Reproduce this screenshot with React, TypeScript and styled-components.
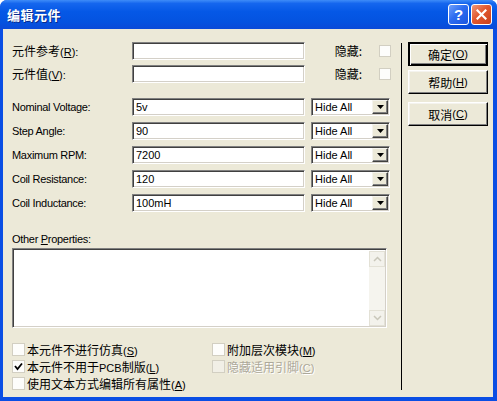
import React from 'react';
import styled, { createGlobalStyle } from 'styled-components';

const Global = createGlobalStyle`
  html, body { margin: 0; padding: 0; background: #ffffff; }
  body { font-family: "Liberation Sans", "Noto Sans CJK SC", sans-serif; }
  * { box-sizing: border-box; }
`;

const Window = styled.div`
  width: 497px;
  height: 401px;
  display: flex;
  flex-direction: column;
  background: #0a4ee4;
  border-radius: 7px 7px 0 0;
  overflow: hidden;
`;

const TitleBar = styled.div`
  height: 29px;
  flex: none;
  display: flex;
  align-items: center;
  padding: 0 5px 0 7px;
  background: linear-gradient(#3e8cf8 0%, #1566ee 12%, #0558e6 40%, #0453e0 75%, #0a4ad8 100%);
`;

const Title = styled.div`
  flex: 1;
  color: #ffffff;
  font-family: "Noto Sans CJK SC", sans-serif;
  font-weight: 700;
  font-size: 13px;
  letter-spacing: 0.5px;
  text-shadow: 1px 1px 0 #0b2a8a;
`;

const CaptionButton = styled.div<{ $kind: 'help' | 'close' }>`
  width: 21px;
  height: 21px;
  margin-left: 2px;
  border: 1px solid #ffffff;
  border-radius: 3px;
  display: flex;
  align-items: center;
  justify-content: center;
  color: #ffffff;
  font-weight: 700;
  font-size: 15px;
  font-family: "Liberation Sans", sans-serif;
  background: ${p =>
    p.$kind === 'help'
      ? 'linear-gradient(135deg, #6fa0fb 0%, #2c6cf0 45%, #1a55e0 100%)'
      : 'linear-gradient(135deg, #f0987a 0%, #e2582f 45%, #c9401c 100%)'};
`;

const Frame = styled.div`
  flex: 1;
  display: flex;
  padding: 0 4px 4px 3px;
`;

const Body = styled.div`
  flex: 1;
  display: flex;
  background: #ece9d8;
  font-size: 12px;
  color: #000000;
`;

const Main = styled.div`
  width: 398px;
  padding: 13px 0 0 9px;
  display: flex;
  flex-direction: column;
`;

const Separator = styled.div`
  width: 1px;
  height: 347px;
  margin-top: 14px;
  background: #000000;
`;

const ButtonCol = styled.div`
  padding: 13px 0 0 6px;
  display: flex;
  flex-direction: column;
`;

const PushButton = styled.div<{ $default?: boolean; $gap: number }>`
  width: 80px;
  height: 24px;
  margin-top: ${p => p.$gap}px;
  display: flex;
  align-items: center;
  justify-content: center;
  font-size: 12px;
  font-family: "Noto Sans CJK SC", sans-serif;
  background: #ece9d8;
  border: 1px solid ${p => (p.$default ? '#000000' : '#ffffff')};
  border-right-color: #000000;
  border-bottom-color: #000000;
  box-shadow: ${p =>
    p.$default
      ? 'inset 1px 1px 0 #000, inset 2px 2px 0 #fff, inset -1px -1px 0 #000, inset -2px -2px 0 #808080'
      : 'inset -1px -1px 0 #808080, inset 1px 1px 0 #f4f3ee'};
`;

const U = styled.span`
  text-decoration: underline;
  text-underline-offset: 1px;
`;

const Acc = styled.span`
  font-family: "Liberation Sans", sans-serif;
  font-size: 11px;
`;

const RefRow = styled.div<{ $gap: number }>`
  display: grid;
  grid-template-columns: 120px 173px 57px 17px 12px;
  align-items: center;
  height: 18px;
  margin-top: ${p => p.$gap}px;
`;

const CnLabel = styled.div`
  font-family: "Noto Sans CJK SC", sans-serif;
  font-size: 12px;
  white-space: nowrap;
  line-height: 14px;
`;

const HideLabel = styled(CnLabel)`
  text-align: right;
`;

const Field = styled.div`
  height: 18px;
  background: #ffffff;
  border-top: 1px solid #808080;
  border-left: 1px solid #808080;
  border-bottom: 1px solid #ffffff;
  border-right: 1px solid #ffffff;
  box-shadow: inset 1px 1px 0 #404040, inset -1px -1px 0 #d4d0c8;
  padding: 0 0 0 3px;
  display: flex;
  align-items: center;
  font-size: 11px;
  font-family: "Liberation Sans", sans-serif;
  white-space: nowrap;
  overflow: hidden;
`;

const Box = styled.div<{ $size: number; $disabled?: boolean }>`
  width: ${p => p.$size}px;
  height: ${p => p.$size}px;
  flex: none;
  background: ${p => (p.$disabled ? '#f1efe6' : '#fdfdfb')};
  border: 1px solid #d2cfc2;
  display: flex;
  align-items: center;
  justify-content: center;
`;

const PropRow = styled.div<{ $gap: number }>`
  display: grid;
  grid-template-columns: 120px 173px 6px 79px;
  align-items: center;
  height: 18px;
  margin-top: ${p => p.$gap}px;
`;

const EnLabel = styled.div`
  font-size: 11px;
  letter-spacing: -0.3px;
  white-space: nowrap;
  line-height: 13px;
`;

const Select = styled(Field)`
  grid-column: 4;
  padding: 0 1px 0 3px;
  justify-content: space-between;
`;

const ArrowButton = styled.div`
  width: 16px;
  height: 14px;
  background: #ece9d8;
  border-top: 1px solid #f4f3ee;
  border-left: 1px solid #f4f3ee;
  border-right: 1px solid #404040;
  border-bottom: 1px solid #404040;
  box-shadow: inset -1px -1px 0 #808080;
  display: flex;
  align-items: center;
  justify-content: center;
`;

const OtherLabel = styled(EnLabel)`
  margin-top: 21px;
  height: 13px;
`;

const TextArea = styled.div`
  margin-top: 2px;
  width: 375px;
  height: 80px;
  background: #ffffff;
  border-top: 1px solid #808080;
  border-left: 1px solid #808080;
  border-bottom: 1px solid #ffffff;
  border-right: 1px solid #ffffff;
  box-shadow: inset 1px 1px 0 #404040, inset -1px -1px 0 #d4d0c8;
  display: flex;
  justify-content: flex-end;
  padding: 2px 1px 1px 2px;
`;

const ScrollTrack = styled.div`
  width: 16px;
  display: flex;
  flex-direction: column;
  justify-content: space-between;
  background: #f5f4ee;
`;

const ScrollBtn = styled.div`
  width: 16px;
  height: 16px;
  border: 1px solid #e3e1d6;
  background: #f3f2ec;
  display: flex;
  align-items: center;
  justify-content: center;
`;

const CheckGrid = styled.div`
  margin-top: 15px;
  display: grid;
  grid-template-columns: 200px 1fr;
  grid-auto-rows: 17px;
`;

const CheckItem = styled.div<{ $disabled?: boolean }>`
  display: flex;
  align-items: flex-start;
  gap: 2px;
  font-family: "Noto Sans CJK SC", sans-serif;
  font-size: 12px;
  line-height: 13px;
  white-space: nowrap;
  color: ${p => (p.$disabled ? '#aca899' : '#000000')};
  text-shadow: ${p => (p.$disabled ? '1px 1px 0 #ffffff' : 'none')};
`;

const Arrow = () => (
  <svg width="7" height="4" viewBox="0 0 7 4">
    <polygon points="0,0 7,0 3.5,4" fill="#000" />
  </svg>
);

const Check = () => (
  <svg width="9" height="9" viewBox="0 0 9 9">
    <polyline points="1,4 3.5,7 8,1.5" fill="none" stroke="#000" strokeWidth="1.8" />
  </svg>
);

const Chevron = ({ up }: { up?: boolean }) => (
  <svg width="9" height="6" viewBox="0 0 9 6">
    <polyline
      points={up ? '1,5 4.5,1.5 8,5' : '1,1 4.5,4.5 8,1'}
      fill="none"
      stroke="#c9c7ba"
      strokeWidth="1.5"
    />
  </svg>
);

const props = [
  { name: 'Nominal Voltage:', value: '5v' },
  { name: 'Step Angle:', value: '90' },
  { name: 'Maximum RPM:', value: '7200' },
  { name: 'Coil Resistance:', value: '120' },
  { name: 'Coil Inductance:', value: '100mH' },
];

export default function App() {
  return (
    <>
      <Global />
      <Window>
        <TitleBar>
          <Title>编辑元件</Title>
          <CaptionButton $kind="help">?</CaptionButton>
          <CaptionButton $kind="close">
            <svg width="11" height="11" viewBox="0 0 11 11">
              <path d="M1.5 1.5 L9.5 9.5 M9.5 1.5 L1.5 9.5" stroke="#fff" strokeWidth="2.2" strokeLinecap="square" />
            </svg>
          </CaptionButton>
        </TitleBar>
        <Frame>
          <Body>
            <Main>
              <RefRow $gap={0}>
                <CnLabel>元件参考<Acc>(<U>R</U>):</Acc></CnLabel>
                <Field />
                <HideLabel>隐藏:</HideLabel>
                <span />
                <Box $size={12} />
              </RefRow>
              <RefRow $gap={5}>
                <CnLabel>元件值<Acc>(<U>V</U>):</Acc></CnLabel>
                <Field />
                <HideLabel>隐藏:</HideLabel>
                <span />
                <Box $size={12} />
              </RefRow>
              {props.map((p, i) => (
                <PropRow key={p.name} $gap={i === 0 ? 15 : 6}>
                  <EnLabel>{p.name}</EnLabel>
                  <Field>{p.value}</Field>
                  <Select>
                    <span>Hide All</span>
                    <ArrowButton>
                      <Arrow />
                    </ArrowButton>
                  </Select>
                </PropRow>
              ))}
              <OtherLabel>
                Other <U>P</U>roperties:
              </OtherLabel>
              <TextArea>
                <ScrollTrack>
                  <ScrollBtn>
                    <Chevron up />
                  </ScrollBtn>
                  <ScrollBtn>
                    <Chevron />
                  </ScrollBtn>
                </ScrollTrack>
              </TextArea>
              <CheckGrid>
                <CheckItem>
                  <Box $size={13} />
                  <span>本元件不进行仿真<Acc>(<U>S</U>)</Acc></span>
                </CheckItem>
                <CheckItem>
                  <Box $size={13} />
                  <span>附加层次模块<Acc>(<U>M</U>)</Acc></span>
                </CheckItem>
                <CheckItem>
                  <Box $size={13}>
                    <Check />
                  </Box>
                  <span>本元件不用于<Acc>PCB</Acc>制版<Acc>(<U>L</U>)</Acc></span>
                </CheckItem>
                <CheckItem $disabled>
                  <Box $size={13} $disabled />
                  <span>隐藏适用引脚<Acc>(<U>C</U>)</Acc></span>
                </CheckItem>
                <CheckItem>
                  <Box $size={13} />
                  <span>使用文本方式编辑所有属性<Acc>(<U>A</U>)</Acc></span>
                </CheckItem>
              </CheckGrid>
            </Main>
            <Separator />
            <ButtonCol>
              <PushButton $default $gap={0}>确定<Acc>(<U>O</U>)</Acc></PushButton>
              <PushButton $gap={4}>帮助<Acc>(<U>H</U>)</Acc></PushButton>
              <PushButton $gap={8}>取消<Acc>(<U>C</U>)</Acc></PushButton>
            </ButtonCol>
          </Body>
        </Frame>
      </Window>
    </>
  );
}
